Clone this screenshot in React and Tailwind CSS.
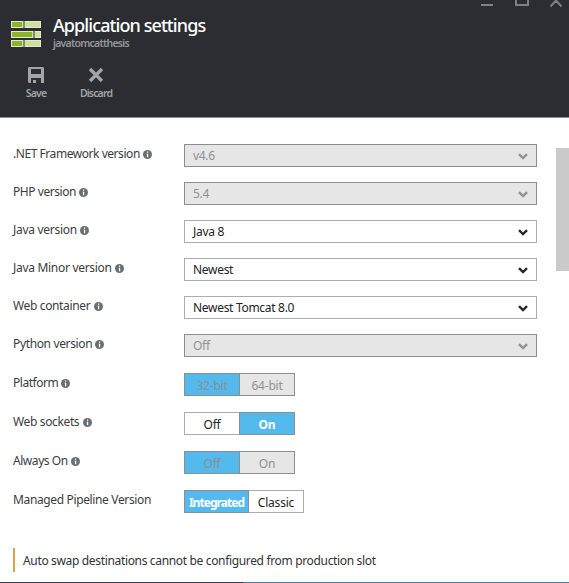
const font = "font-['Noto_Sans','Open_Sans',sans-serif]";

function Info() {
  return (
    <svg className="mt-px h-[9px] w-[9px] shrink-0" viewBox="0 0 9 9">
      <circle cx="4.5" cy="4.5" r="4.5" fill="#6a6f73" />
      <path d="M4 1.500h1.200v1.200H4zM3.600 3.700h1.600v3.500H4v-2.700h-.4z" fill="#fff" />
    </svg>
  );
}

function Label({ text, width, tracking = "tracking-[-0.36px]", info = true }) {
  return (
    <div className={`flex h-[20px] w-[171px] shrink-0 items-center gap-[3px] text-[#3a3d40] ${tracking}`}>
      <span className={`whitespace-nowrap ${width}`}>{text}</span>
      {info && <Info />}
    </div>
  );
}

const selects = [
  [".NET Framework version", "w-[127px]", "v4.6", true, "tracking-[-0.45px]"],
  ["PHP version", "w-[63px]", "5.4", true, "tracking-[-0.45px]"],
  ["Java version", "w-[64px]", "Java 8", false, "tracking-[-0.28px]"],
  ["Java Minor version", "w-[99px]", "Newest", false, "tracking-[-0.3px]"],
  ["Web container", "w-[78px]", "Newest Tomcat 8.0", false],
  ["Python version", "w-[79px]", "Off", true],
];

const toggles = [
  { label: "Platform", w: "w-[45px]", options: ["32-bit", "64-bit"], on: 0, disabled: true, tracking: "tracking-[-0.45px]" },
  { label: "Web sockets", w: "w-[67px]", options: ["Off", "On"], on: 1 },
  { label: "Always On", w: "w-[55px]", options: ["Off", "On"], on: 0, disabled: true, tracking: "tracking-[-0.45px]" },
  { label: "Managed Pipeline Version", w: "w-[138px]", options: ["Integrated", "Classic"], on: 0, wide: true, noInfo: true },
];

function Segment({ text, active, disabled, size, first }) {
  const border = active || disabled ? "border-[#8b8d8f]" : "border-[#adadad]";
  const tone = active
    ? disabled ? "bg-[#54b9ec] text-[#8a9092]" : "bg-[#54b9ec] font-bold text-white"
    : disabled ? "bg-[#e6e6e6] text-[#8f9193]" : "bg-white text-[#202326]";
  const tracking = text === "Integrated" ? "tracking-[-0.95px]" : "tracking-[-0.2px]";
  return (
    <div className={`flex h-[23px] items-center justify-center whitespace-nowrap border pt-[2px] ${size} ${border} ${tone} ${tracking} ${first ? "" : "-ml-px"} ${active ? "relative" : ""}`}>
      {text}
    </div>
  );
}

export default function App() {
  return (
    <div className={`flex h-[583px] w-[569px] flex-col overflow-hidden bg-white text-[12px] leading-[20px] ${font}`}>
      <header className="flex h-[118px] shrink-0 justify-between border-b border-[#8b8d90] bg-[#2b2d32]">
        <div className="pl-[11px] pt-[14px]">
          <div className="flex gap-3">
            <svg className="mt-[7px] h-[26px] w-[30px]" viewBox="0 0 30 26">
              {[[0, 11], [10, 21], [19, 11]].map(([y, w]) => (
                <g key={y}>
                  <rect y={y} width="30" height="7" fill="#e3ebcb" />
                  <rect x="1" y={y + 1} width="28" height="5" fill="#cfdf9c" />
                  <rect x="1" y={y + 1} width={w - 1} height="5" fill="#8ab52b" />
                  <rect x={w + 1} y={y} width="2" height="7" fill="#85897f" />
                </g>
              ))}
            </svg>
            <div className="flex flex-col">
              <h1 className="h-[22px] whitespace-nowrap text-[18px] font-medium leading-[22px] tracking-[-0.92px] text-white">Application settings</h1>
              <div className="-mt-px h-[17px] whitespace-nowrap text-[10.5px] font-semibold leading-[17px] tracking-[-0.75px] text-[#95979a]">javatomcatthesis</div>
            </div>
          </div>
          <div className="mt-[15px] flex gap-[33px] pl-[14px] text-[10.5px] font-semibold tracking-[-0.85px] text-[#a0a2a5]">
            <div className="flex w-[22px] flex-col items-center">
              <svg className="h-[16px] w-[16px] shrink-0" viewBox="0 0 16 16">
                <path fillRule="evenodd" d="M1 0h14l1 1v15h-3v-5H3v5H1l-1-1V1zM3 2v5h10V2z" fill="#a2a4a7" />
                <path d="M5 13h3v3H5z" fill="#a2a4a7" />
              </svg>
              <span>Save</span>
            </div>
            <div className="flex w-[32px] flex-col items-center">
              <svg className="h-[16px] w-[16px] shrink-0" viewBox="0 0 16 16">
                <path d="M2 2l12 12M14 2L2 14" stroke="#a2a4a7" strokeWidth="3.400" />
              </svg>
              <span>Discard</span>
            </div>
          </div>
        </div>
        <svg className="mr-[7px] h-[7px] w-[81px]" viewBox="0 0 81 7" fill="none" stroke="#7d8184" strokeWidth="2">
          <path d="M0 5h12M35 -1v6h12V-1M69.500 6.500l5.500-6 5.500 6" />
        </svg>
      </header>
      <main className="flex h-[464px] shrink-0 justify-between">
        <div className="pl-[13px] pt-[26px]">
          <div className="flex flex-col gap-[15px]">
            {selects.map(([label, w, value, disabled, tracking]) => (
              <div className="flex h-[23px] items-start" key={label}>
                <Label text={label} width={w} tracking={tracking} />
                <div className={`flex h-[23px] w-[353px] items-center justify-between border pl-2 pr-[8px] pt-px tracking-[-0.3px] ${disabled ? "border-[#8b8d8f] bg-[#e6e6e6] text-[#8f9193]" : "border-[#adadad] bg-white text-[#202326]"}`}>
                  <span>{value}</span>
                  <svg className="h-[7px] w-[10px]" viewBox="0 0 10 7">
                    <path d="M1 1.200l4 3.800 4-3.800" stroke={disabled ? "#8f9193" : "#24272c"} strokeWidth="2.400" fill="none" />
                  </svg>
                </div>
              </div>
            ))}
          </div>
          <div className="mt-4 flex flex-col gap-4">
            {toggles.map((t) => (
              <div className="flex h-[23px] items-start" key={t.label}>
                <Label text={t.label} width={t.w} tracking={t.tracking} info={!t.noInfo} />
                <Segment text={t.options[0]} active={t.on === 0} disabled={t.disabled} size={t.wide ? "w-[65px]" : "w-[56px]"} first />
                <Segment text={t.options[1]} active={t.on === 1} disabled={t.disabled} size="w-[56px]" />
              </div>
            ))}
          </div>
          <div className="mt-[35px] flex h-6 items-center whitespace-nowrap border-l-2 border-[#dda04e] pl-2 pt-[2px] tracking-[-0.34px] text-[#303336]">
            Auto swap destinations cannot be configured from production slot
          </div>
        </div>
        <div className="mt-[30px] h-[123px] w-[13px] bg-[#cacaca]" />
      </main>
      <div className="flex h-px shrink-0">
        <div className="w-[243px] bg-[#2f4058]" />
        <div className="flex-1 bg-[#4a7f9f]" />
      </div>
    </div>
  );
}
